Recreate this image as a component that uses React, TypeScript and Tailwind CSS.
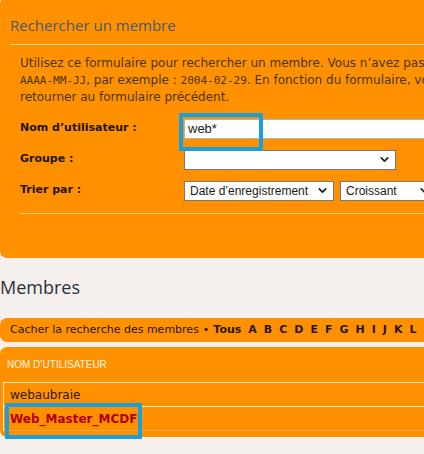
import React from 'react';
import { ChevronDown } from 'lucide-react';

const letters = ['A', 'B', 'C', 'D', 'E', 'F', 'G', 'H', 'I', 'J', 'K', 'L', 'M', 'N', 'O', 'P', 'Q', 'R', 'S', 'T', 'U', 'V', 'W', 'X', 'Y', 'Z'];

const FakeSelect: React.FC<{ label: string; className: string }> = ({ label, className }) => {
  return (
    <div className={`h-[20px] bg-white border border-[#7a7a7a] flex items-center justify-between pl-[5px] pr-[4px] text-[12px] text-[#1a1a1a] font-['Liberation_Sans',sans-serif] ${className}`}>
      <span className="whitespace-nowrap leading-none">{label}</span>
      <ChevronDown size={13} strokeWidth={3.2} className="text-[#222] shrink-0" />
    </div>
  );
};

const App: React.FC = () => {
  return (
    <div className="relative w-[424px] h-[454px] overflow-hidden bg-[#f5f0ee] font-['DejaVu_Sans',sans-serif]">
      <div className="w-[720px]">
        {/* search panel */}
        <div className="-mt-[3px] pt-[18px] pb-[44px] bg-[#ff9100] rounded-tl-[7px] rounded-bl-[7px]">
          <h2 className="ml-[10px] text-[15px] leading-[20px] text-[#4d5869] font-['Open_Sans',sans-serif]">Rechercher un membre</h2>
          <div className="ml-[10px] mt-[9px] h-px bg-[#ffd596]" />

          <div className="ml-[20px]">
            <p className="mt-[10px] text-[12px] leading-[17px] text-[#4a3510] whitespace-nowrap">
              Utilisez ce formulaire pour rechercher un membre. Vous n’avez pas besoin de remplir tous les champs. Lorsque vous entrez des dates, utilisez le format
              <br />
              <span className="font-['DejaVu_Sans_Mono',monospace] text-[11px]">AAAA-MM-JJ</span>, par exemple : <span className="font-['DejaVu_Sans_Mono',monospace] text-[11px]">2004-02-29</span>. En fonction du formulaire, vous pouvez revenir et
              <br />
              retourner au formulaire précédent.
            </p>

            <div className="mt-[7px] flex flex-col">
              <div className="h-[31px] flex items-center">
                <label className="w-[164px] text-[11px] font-bold text-[#241400]">Nom d’utilisateur :</label>
                <div className="w-[400px] h-[20px] bg-white border border-[#b5b5b5] flex items-center pl-[3px] text-[13px] text-[#1a1a1a] font-['Liberation_Sans',sans-serif]">web*</div>
              </div>
              <div className="h-[31px] flex items-center">
                <label className="w-[164px] text-[11px] font-bold text-[#241400]">Groupe :</label>
                <FakeSelect label="" className="w-[212px]" />
              </div>
              <div className="h-[31px] flex items-center">
                <label className="w-[164px] text-[11px] font-bold text-[#241400]">Trier par :</label>
                <div className="flex gap-[6px]">
                  <FakeSelect label="Date d’enregistrement" className="w-[150px]" />
                  <FakeSelect label="Croissant" className="w-[96px]" />
                </div>
              </div>
            </div>

            <div className="mt-[7px] h-px bg-[#ffc77a]" />
          </div>
        </div>

        {/* members */}
        <h2 className="mt-[17px] text-[18px] leading-[24px] text-[#27303d] font-['Open_Sans',sans-serif]">Membres</h2>

        <div className="mt-[19px] h-[24px] bg-[#ff9100] rounded-l-[7px] flex items-center pl-[10px] text-[11px] text-[#2a1600] whitespace-nowrap">
          <span>Cacher la recherche des membres</span>
          <span className="mx-[4px]">•</span>
          <span className="font-bold">Tous</span>
          {letters.map((l) => (
            <span key={l} className="font-bold ml-[7px]">{l}</span>
          ))}
        </div>

        <div className="mt-[5px] bg-[#ff9100] rounded-l-[7px] pb-[6px] pl-[3px]">
          <div className="h-[35px] flex items-center pl-[4px] text-[10px] uppercase text-[#fff4e4] font-['Liberation_Sans',sans-serif]">Nom d’utilisateur</div>
          <div className="border-l border-[#ffe2b8]">
            <div className="h-[24px] border-t border-[#fff0d6] flex items-center pl-[6px] text-[12px] text-[#2a1a05]">webaubraie</div>
            <div className="h-[25px] border-t border-b border-t-[#fff0d6] border-b-[#f0a650] flex items-center pl-[6px] text-[12px] font-bold text-[#b00000]">Web_Master_MCDF</div>
          </div>
        </div>
      </div>

      {/* highlight boxes */}
      <div className="absolute left-[179px] top-[113px] w-[84px] h-[38px] border-4 border-[#1a9fdb]" />
      <div className="absolute left-[5px] top-[403px] w-[137px] h-[36px] border-4 border-[#1a9fdb]" />
    </div>
  );
};

export default App;
